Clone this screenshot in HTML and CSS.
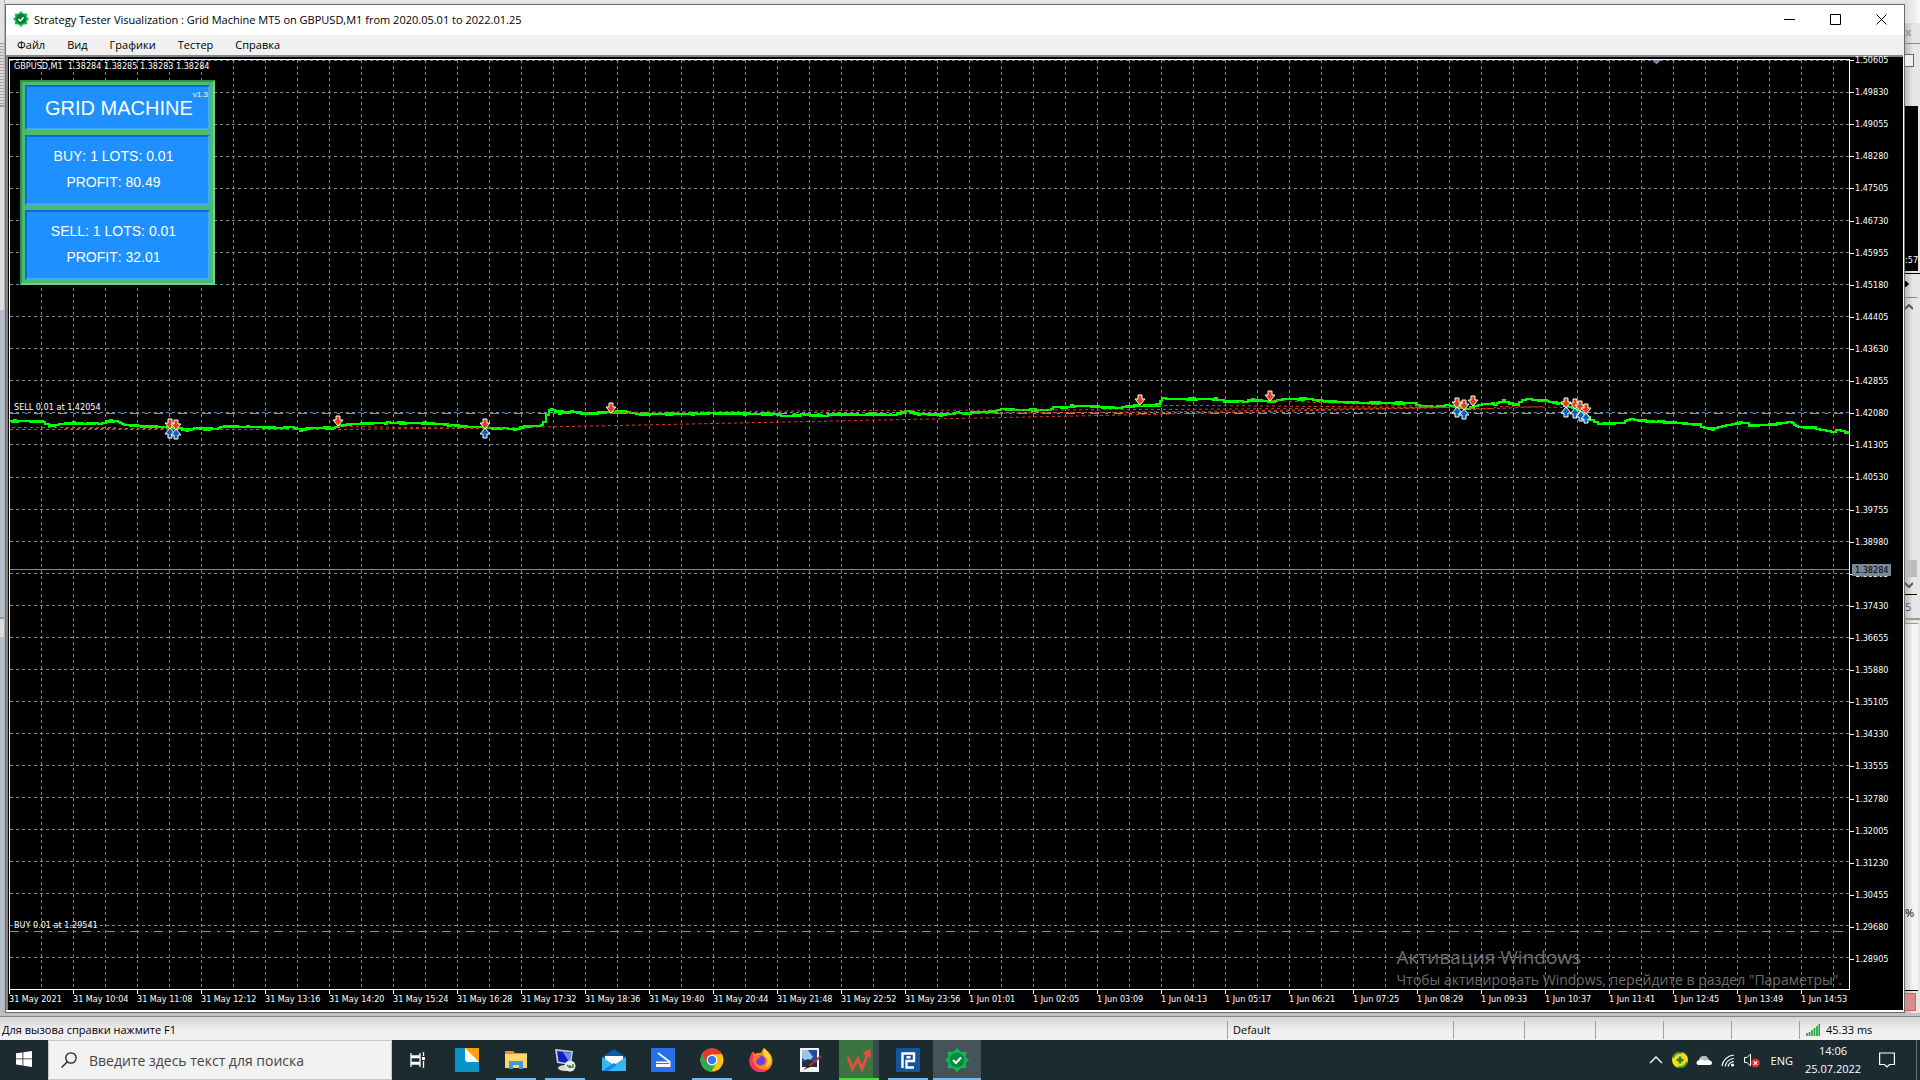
FILE: index.html
```html
<!DOCTYPE html>
<html lang="ru">
<head>
    <meta charset="UTF-8">
    <meta name="viewport" content="width=device-width, initial-scale=1.0">
    <title>Strategy Tester Visualization</title>
    <link rel="stylesheet" href="styles.css">
</head>
<body>
    <div class="workspace">
        <div class="behind-left">
            <div class="bl-title"></div>
            <div class="bl-tools"></div>
            <div class="bl-light"></div>
            <div class="bl-blue"></div>
            <div class="bl-split"></div>
            <div class="bl-blue bl-rest"></div>
        </div>

        <main class="window">
            <header class="titlebar">
                <svg class="app-icon" viewBox="0 0 24 24"><path d="M12 0l3.600 3.700L21.500 4l-1 4.800L24 12l-3.500 3.200 1 4.800-5.900.300L12 24l-3.600-3.700L2.500 20l1-4.800L0 12l3.500-3.200-1-4.800 5.900-.300z" fill="#10b94e"/><circle cx="12" cy="12" r="7.500" fill="#067a38"/><path d="M8 12l3 3 5-5.500" fill="none" stroke="#fff" stroke-width="2.200"/></svg>
                <h1>Strategy Tester Visualization : Grid Machine MT5 on GBPUSD,M1 from 2020.05.01 to 2022.01.25</h1>
                <button class="win-btn" aria-label="Свернуть"><svg viewBox="0 0 11 11"><path d="M0 5.500h11"/></svg></button>
                <button class="win-btn" aria-label="Развернуть"><svg viewBox="0 0 11 11"><path d="M.5.5h10v10H.5z"/></svg></button>
                <button class="win-btn" aria-label="Закрыть"><svg viewBox="0 0 11 11"><path d="M.5.5l10 10M10.500.5l-10 10"/></svg></button>
            </header>
            <nav class="menubar">
                <button>Файл</button>
                <button>Вид</button>
                <button>Графики</button>
                <button>Тестер</button>
                <button>Справка</button>
            </nav>

            <div class="chart">
                <div class="plot">
                    <svg id="plotSvg" viewBox="10 60 1839 929" preserveAspectRatio="none">
                        <defs>
                            <path id="sellArrow" d="M-2-5h4v4h3L0 5-5-1h3z" fill="#e0401c" stroke="#fff"/>
                            <path id="buyArrow" d="M-2 5h4V1h3L0-5-5 1h3z" fill="#1060b8" stroke="#fff"/>
                        </defs>
                        <g id="grid" class="grid"></g>
                        <path class="position" d="M10 413.500H1849M10 931.500H1849"/>
                        <path class="bid" d="M10 569.500H1849"/>
                        <path id="price" class="price"/>
                        <path class="trades" d="M12 427.500H116M10 429.500H320M65 428.500H170M338 426.500L485 428.500M338 429.500L520 427.500L1100 415.500L1445 407.500M611 412.500L860 410.500L1160 409.500L1450 407.500M950 413.500L1200 411.500L1450 407.500M1140 405.500H1200L1450 407.500M1271 400.500L1320 402.500L1456 407.500M1473 409.500L1545 406.500M1470 408.500H1490L1500 406.500L1570 407.500"/>
                        <g id="arrows"></g>
                        <path d="M1652 60h9l-4.500 4.500z" fill="#778899"/>
                    </svg>
                    <p class="quote">GBPUSD,M1&nbsp; 1.38284 1.38285 1.38283 1.38284</p>
                    <section class="panel">
                        <div class="panel-head">GRID MACHINE<small>v1.3</small></div>
                        <div class="panel-row"><span>BUY: 1 LOTS: 0.01</span><span>PROFIT: 80.49</span></div>
                        <div class="panel-row"><span>SELL: 1 LOTS: 0.01</span><span>PROFIT: 32.01</span></div>
                    </section>
                    <p class="order order-sell">SELL 0.01 at 1.42054</p>
                    <p class="order order-buy">BUY 0.01 at 1.29541</p>
                </div>
                <div class="price-axis">
                    <ul>
                        <li>1.50605</li><li>1.49830</li><li>1.49055</li><li>1.48280</li><li>1.47505</li>
                        <li>1.46730</li><li>1.45955</li><li>1.45180</li><li>1.44405</li><li>1.43630</li>
                        <li>1.42855</li><li>1.42080</li><li>1.41305</li><li>1.40530</li><li>1.39755</li>
                        <li>1.38980</li><li>1.38205</li><li>1.37430</li><li>1.36655</li><li>1.35880</li>
                        <li>1.35105</li><li>1.34330</li><li>1.33555</li><li>1.32780</li><li>1.32005</li>
                        <li>1.31230</li><li>1.30455</li><li>1.29680</li><li>1.28905</li>
                    </ul>
                    <span class="price-tag">1.38284</span>
                </div>
                <ul class="time-axis">
                    <li>31 May 2021</li><li>31 May 10:04</li><li>31 May 11:08</li><li>31 May 12:12</li>
                    <li>31 May 13:16</li><li>31 May 14:20</li><li>31 May 15:24</li><li>31 May 16:28</li>
                    <li>31 May 17:32</li><li>31 May 18:36</li><li>31 May 19:40</li><li>31 May 20:44</li>
                    <li>31 May 21:48</li><li>31 May 22:52</li><li>31 May 23:56</li><li>1 Jun 01:01</li>
                    <li>1 Jun 02:05</li><li>1 Jun 03:09</li><li>1 Jun 04:13</li><li>1 Jun 05:17</li>
                    <li>1 Jun 06:21</li><li>1 Jun 07:25</li><li>1 Jun 08:29</li><li>1 Jun 09:33</li>
                    <li>1 Jun 10:37</li><li>1 Jun 11:41</li><li>1 Jun 12:45</li><li>1 Jun 13:49</li>
                    <li>1 Jun 14:53</li>
                </ul>
            </div>
        </main>

        <div class="behind-right">
            <div class="br-title"></div>
            <div class="br-close">x</div>
            <div class="br-tools"><i></i></div>
            <div class="br-chart">:57</div>
            <div class="br-tab"><svg viewBox="0 0 5 8"><path d="M0 1h1l3 3-3 3H0z"/></svg></div>
            <div class="br-scroll">
                <svg viewBox="0 0 8 6"><path d="M0 5l4-4 4 4"/></svg>
                <i></i>
                <svg viewBox="0 0 8 6"><path d="M0 1l4 4 4-4"/></svg>
            </div>
            <div class="br-num">5</div>
            <div class="br-list">%</div>
            <div class="br-stop"></div>
        </div>

        <div class="watermark">
            <p class="wm-title">Активация Windows</p>
            <p>Чтобы активировать Windows, перейдите в раздел "Параметры".</p>
        </div>
    </div>

    <div class="statusbar">
        <span class="st-help">Для вызова справки нажмите F1</span>
        <span class="st-profile">Default</span>
        <span class="st-cell"></span>
        <span class="st-cell"></span>
        <span class="st-cell"></span>
        <span class="st-cell"></span>
        <span class="st-cell"></span>
        <span class="st-ping"><svg viewBox="0 0 14 12"><path d="M1 12V9M3.500 12V8M6 12V6M8.500 12V4M11 12V2M13.300 12V0" stroke="#1fa33c" stroke-width="1.700"/></svg>45.33 ms</span>
    </div>

    <footer class="taskbar">
        <button class="start" aria-label="Пуск"><svg viewBox="0 0 16 16" width="16" height="16"><path d="M0 2.300L6.500 1.400v6.100H0zM7.300 1.300L16 0v7.500H7.300zM0 8.300h6.500v6.200L0 13.600zM7.300 8.300H16V16l-8.700-1.300z" fill="#fff"/></svg></button>
        <label class="search">
            <svg viewBox="0 0 16 16"><circle cx="10" cy="6" r="5.200"/><path d="M6.300 9.700L.6 15.500"/></svg>
            <input type="text" placeholder="Введите здесь текст для поиска" aria-label="Поиск">
        </label>
        <div class="apps">
            <button aria-label="Представление задач"><svg viewBox="0 0 24 24"><path d="M5 5v3h9V5M5 19v-3h9v3M5 9.500h9v5H5zM17.500 4v4M17.500 13v7" fill="none" stroke="#fff" stroke-width="1.300"/><path d="M16 9h3v3h-3z" fill="#fff"/></svg></button>
            <button aria-label="Редактор"><svg viewBox="0 0 24 24"><rect width="24" height="24" rx="1" fill="#0a93c6"/><path d="M10 0h14v14H13q-3 0-3-3z" fill="#fff"/><path d="M10 0h14v14z" fill="#ff9f0f"/></svg></button>
            <button class="open" aria-label="Проводник"><svg viewBox="0 0 24 24"><path d="M1 3h8l2 2h12v5H1z" fill="#e09a12"/><path d="M1 6h22v14H1z" fill="#ffd766"/><path d="M5 21v-8h14v8h-4v-4H9v4z" fill="#3f98e0"/></svg></button>
            <button class="open" aria-label="Удалённый рабочий стол"><svg viewBox="0 0 24 24"><path d="M2 1l18 2-2 14L4 15z" fill="#c8ccd8"/><path d="M4 3l14 1.500-1.500 11L5.500 13.500z" fill="#1020c0"/><path d="M10 4l8 1-1.500 10z" fill="#6a8cf0"/><ellipse cx="12" cy="20" rx="7" ry="3" fill="#d8d8d8"/><circle cx="17" cy="18" r="5.500" fill="#e8e8e8"/><path d="M14 17l3 3M17 20v-3M20 16v3h-3" stroke="#28943a" stroke-width="1.500" fill="none"/></svg></button>
            <button aria-label="Почта"><svg viewBox="0 0 24 24"><path d="M0 9L12 1l12 8v3H0z" fill="#0a5cae"/><path d="M3 8h18v8H3z" fill="#fff"/><path d="M0 9l12 8 12-8v14H0z" fill="#35b8f2"/><path d="M0 23l12-8 3 2-9 6z" fill="#1688dc"/></svg></button>
            <button aria-label="Сканер"><svg viewBox="0 0 24 24"><rect width="24" height="24" fill="#2a6fea"/><path d="M7 5l12 9" stroke="#fff" stroke-width="1.600"/><path d="M5 13.500h14.500V19H5z" fill="#fff"/><path d="M5 15.500h13" stroke="#2a6fea"/></svg></button>
            <button class="open" aria-label="Chrome"><svg viewBox="0 0 24 24"><circle cx="12" cy="12" r="11.500" fill="#fbc116"/><path d="M12 12L2 6.300a11.500 11.500 0 0 0 9.500 17.200l5-9z" fill="#2da94f"/><path d="M2 6.300A11.500 11.500 0 0 1 22 6.300H12L7 14.800z" fill="#e33b2e"/><circle cx="12" cy="12" r="5.400" fill="#fff"/><circle cx="12" cy="12" r="4.200" fill="#2f7de9"/></svg></button>
            <button aria-label="Firefox"><svg viewBox="0 0 24 24"><path d="M15 0c4 3 8.500 7 8.500 13A11.500 11 0 0 1 .5 13C.5 9 2 6 4 3.500L6 6q3-2 6-1 1-3 3-5z" fill="#ff8a16"/><path d="M15 0c2 3 8 6 7 13-1 4-4 6-6 6 4-5 3-9-1-11-1-3-1-5 0-8z" fill="#ffd53c"/><path d="M.5 13A11.500 11 0 0 0 20 21Q8 24 4 13L4 4Q.5 8 .5 13z" fill="#f5355b"/><circle cx="11.500" cy="12.500" r="5" fill="#7a3ddb"/><path d="M4 8q5-2 8 1-5 1-4 4-4-1-4-5z" fill="#ff7a1c"/></svg></button>
            <button aria-label="Рисунок"><svg viewBox="0 0 24 24"><path d="M2 0h19v24H2z" fill="#f2f2f2"/><path d="M4 2h15v15H4z" fill="#1c4e9a"/><path d="M4 2h6l5 7-5 5-6-4z" fill="#9ac4ee"/><path d="M4 14l6-3 9 4v4H4z" fill="#22303e"/><path d="M23 8L10 19" stroke="#b03030" stroke-width="2"/><path d="M11 17l-6 5 7-3z" fill="#222"/></svg></button>
            <button class="alert" aria-label="Webmoney"><svg viewBox="0 0 24 24"><path d="M1 9l4.500 12L11 11l4 10L21 5M16.500 6L22 3l1 6" fill="none" stroke="#ee4a42" stroke-width="2.800"/></svg></button>
            <button class="open" aria-label="Project"><svg viewBox="0 0 24 24"><rect width="24" height="24" rx="1" fill="#15549c"/><path d="M6.500 20V5.500H18v7.500h-7.500v6.500H18M10.500 9.300h4" fill="none" stroke="#fff" stroke-width="2.400"/></svg></button>
            <button class="active" aria-label="Strategy Tester"><svg viewBox="0 0 24 24"><path d="M12 0l3.600 3.700L21.500 4l-1 4.800L24 12l-3.500 3.200 1 4.800-5.900.300L12 24l-3.600-3.700L2.500 20l1-4.800L0 12l3.500-3.200-1-4.800 5.900-.300z" fill="#10b94e"/><circle cx="12" cy="12" r="7.500" fill="#078a3f"/><path d="M8 12l3 3 5-5.500" fill="none" stroke="#fff" stroke-width="2"/></svg></button>
        </div>
        <div class="tray">
            <svg viewBox="0 0 16 16"><path d="M2 11l6-6 6 6" fill="none" stroke="#fff" stroke-width="1.300"/></svg>
            <svg viewBox="0 0 16 16"><circle cx="8" cy="8" r="8" fill="#ffd91e"/><path d="M1 6a7.300 7.300 0 0 1 9-5M15 10a7.300 7.300 0 0 1-9 5" fill="none" stroke="#2f9a38" stroke-width="2"/><path d="M8 4.500v7M4.500 8h7" stroke="#168a2c" stroke-width="2.600"/></svg>
            <svg viewBox="0 0 16 16"><path d="M3 8a5 5 0 0 1 9-2l2 4H3z" fill="#b9bcbe"/><path d="M2 13a2.500 2.500 0 0 1 1-4.800Q6 6 8.500 9L12 8q4 .5 4 3 0 2-2 2z" fill="#fff"/></svg>
            <svg viewBox="0 0 16 16"><path d="M2 14A13 13 0 0 1 14 3M5 14.500A10 10 0 0 1 14 6.500M8 14.500A7 7 0 0 1 14 9.500" fill="none" stroke="#fff" stroke-width="1.200"/><circle cx="12.500" cy="13" r="1.600" fill="#fff"/></svg>
            <svg viewBox="0 0 16 16"><path d="M.5 5.500h2.500L6.500 2v12L3 10.500H.5z" fill="none" stroke="#fff"/><circle cx="11.500" cy="11" r="4.500" fill="#e0262e"/><path d="M9.700 9.200l3.600 3.600M13.300 9.200l-3.600 3.600" stroke="#fff" stroke-width="1.200"/></svg>
            <span class="lang">ENG</span>
            <time class="clock" datetime="2022-07-25T14:06"><span>14:06</span><span>25.07.2022</span></time>
            <svg class="notify" viewBox="0 0 16 16"><path d="M.6 1h14.800v11.500H10.500L8 15l-2.500-2.500H.6z" fill="none" stroke="#fff" stroke-width="1.200"/></svg>
            <span class="peek"></span>
        </div>
    </footer>

    <script src="script.js"></script>
</body>
</html>
```
FILE: styles.css
```css
* {
    box-sizing: border-box;
}

body {
    margin: 0;
    height: 100vh;
    display: flex;
    flex-direction: column;
    overflow: hidden;
    background-color: #ececec;
    color: #000;
    font-family: "Open Sans", "Noto Sans", sans-serif;
    font-size: 11px;
}

h1, p, ul {
    margin: 0;
    padding: 0;
    font-weight: normal;
    list-style: none;
}

button {
    border: 0;
    padding: 0;
    background: none;
    font: inherit;
    color: inherit;
}

.workspace {
    position: relative;
    flex: 1;
    display: flex;
    min-height: 0;
    padding-bottom: 3px;
    background: linear-gradient(#ededed, #d8d8d8 6px, #c2c0c0);
}

/* edges of the terminal behind the tester window */
.behind-left {
    width: 5px;
    display: flex;
    flex-direction: column;
    border-right: 1px solid #b4b4b4;
    background-color: #d4d4d4;
}

.bl-title {
    height: 44px;
    border-bottom: 1px solid #999;
    background-color: #e2e2e2;
}

.bl-tools {
    height: 63px;
    border-bottom: 2px solid #999;
    background: repeating-linear-gradient(#d8d8d8 0 2px, #aaa 2px 3px);
}

.bl-light {
    height: 203px;
    background-color: #dcdcdc;
}

.bl-blue {
    height: 307px;
    background-color: #b3c0cc;
}

.bl-split {
    height: 20px;
    border-top: 2px solid #999;
    background-color: #dcdcdc;
}

.bl-rest {
    flex: 1;
}

.behind-right {
    width: 15px;
    display: flex;
    flex-direction: column;
    background: linear-gradient(90deg, #bbb, #e6e6e6 8px);
}

.br-title {
    height: 23px;
    background: linear-gradient(90deg, #ddd, #fafafa);
}

.br-close {
    height: 21px;
    border-bottom: 1px solid #888;
    color: #999;
    font-weight: bold;
    line-height: 18px;
}

.br-tools {
    height: 62px;
    padding-top: 10px;
}

.br-tools i {
    display: block;
    width: 9px;
    height: 13px;
    border: 1px solid #666;
    border-left: 0;
    background-color: #f0f0f0;
}

.br-chart {
    width: 13px;
    height: 165px;
    padding-top: 147px;
    background-color: #000;
    color: #fff;
    font: 9px/14px "DejaVu Sans Condensed", sans-serif;
}

.br-tab {
    height: 24px;
    margin-top: 2px;
    padding-top: 6px;
    border-top: 1px solid #000;
}

.br-tab svg {
    display: block;
    width: 5px;
    height: 8px;
}

.br-scroll {
    width: 12px;
    height: 298px;
    padding: 6px 0;
    display: flex;
    flex-direction: column;
    justify-content: flex-end;
    gap: 5px;
    border-top: 1px solid #888;
    border-bottom: 1px solid #000;
}

.br-scroll svg {
    width: 8px;
    height: 6px;
    fill: none;
    stroke: #555;
    stroke-width: 2;
}

.br-scroll svg:first-child {
    margin-bottom: auto;
}

.br-scroll i {
    height: 17px;
    background-color: #bdbdbd;
}

.br-num {
    height: 25px;
    border-bottom: 2px solid #999;
    color: #2d5f8c;
    line-height: 24px;
}

.br-list {
    flex: 1;
    width: 13px;
    margin-top: 3px;
    padding-top: 281px;
    border-top: 1px solid #999;
    border-bottom: 1px solid #000;
    background: linear-gradient(90deg, #c8c8c8, #f4f4f4 8px);
    overflow: hidden;
}

.br-stop {
    width: 11px;
    height: 18px;
    margin: 2px 0;
    border: 1px solid #c66;
    border-left: 0;
    background-color: #d98c8e;
}

/* tester window */
.window {
    flex: 1;
    min-width: 0;
    margin-top: 4px;
    display: flex;
    flex-direction: column;
    border: 1px solid #6b6b6b;
    background-color: #fff;
}

.titlebar {
    height: 30px;
    padding: 0 0 2px 7px;
    display: flex;
    align-items: center;
}

.titlebar h1 {
    flex: 1;
    padding-left: 5px;
    font-size: 11px;
}

.app-icon {
    width: 16px;
    height: 16px;
}

.win-btn {
    align-self: flex-start;
    width: 46px;
    height: 30px;
}

.win-btn svg {
    width: 11px;
    height: 11px;
    fill: none;
    stroke: #000;
}

.menubar {
    height: 20px;
    padding-bottom: 2px;
    display: flex;
    background-color: #f0f0f0;
}

.menubar button {
    padding: 0 11px;
}

.chart {
    flex: 1;
    min-height: 0;
    margin: 0 1px 2px 0;
    padding: 2px 0 0 1px;
    display: grid;
    grid-template-columns: 1fr 53px;
    grid-template-rows: 1fr 21px;
    border-top: 2px solid #868686;
    border-left: 2px solid #868686;
    background-color: #000;
    color: #fff;
    font: 9px/12px "DejaVu Sans Condensed", "DejaVu Sans", sans-serif;
}

.plot {
    position: relative;
    border: 1px solid #fff;
}

.plot > svg {
    display: block;
    width: 100%;
    height: 100%;
}

.grid {
    stroke: #778899;
    stroke-dasharray: 3 3;
}

.position {
    fill: none;
    stroke: #32cd32;
    stroke-dasharray: 9 6 3 6;
}

.bid {
    stroke: #778899;
}

.price {
    fill: none;
    stroke: #00ff00;
    stroke-width: 2;
}

.trades {
    fill: none;
    stroke: #e04020;
    stroke-dasharray: 3 3;
}

.quote,
.order {
    position: absolute;
    left: 4px;
    top: 0;
}

.order-sell {
    top: 37%;
    margin-top: -3px;
}

.order-buy {
    top: 92%;
    margin-top: 4px;
}

.panel {
    position: absolute;
    top: 20px;
    left: 10px;
    width: 195px;
    padding: 3px;
    display: flex;
    flex-direction: column;
    gap: 5px;
    border: 2px solid;
    border-color: #309050 #6cd48c #6cd48c #309050;
    background-color: #50b870;
    font-family: "Liberation Sans", Arial, sans-serif;
    font-kerning: none;
}

.panel-head,
.panel-row {
    border: 2px solid;
    border-color: #0070e0 #3cacff #3cacff #0070e0;
    background-color: #1e90ff;
}

.panel-head {
    height: 45px;
    padding-left: 18px;
    display: flex;
    font-size: 20px;
    line-height: 43px;
}

.panel-head small {
    padding-top: 2px;
    font-size: 8px;
    line-height: 12px;
}

.panel-row {
    height: 70px;
    padding: 6px 8px 0 0;
    display: flex;
    flex-direction: column;
    align-items: center;
    font-size: 14px;
    line-height: 26px;
}

.price-axis {
    position: relative;
}

.price-axis ul {
    height: 100%;
    margin-top: -5px;
    display: flex;
    flex-direction: column;
}

.price-axis li {
    flex: 1;
    display: flex;
}

.price-axis li::before {
    content: "";
    width: 4px;
    height: 1px;
    margin: 6px 1px 0 0;
    background-color: #fff;
}

.price-tag {
    position: absolute;
    top: 505px;
    left: 2px;
    width: 39px;
    height: 12px;
    padding-left: 3px;
    background-color: #778899;
    color: #000;
}

.time-axis {
    grid-column: 1 / 3;
    display: flex;
    overflow: hidden;
}

.time-axis li {
    flex: 0 0 64px;
    padding-top: 3px;
    white-space: nowrap;
    background: linear-gradient(#fff, #fff) no-repeat 0 0 / 1px 4px;
}

.watermark {
    position: absolute;
    right: 78px;
    bottom: 26px;
    color: rgba(140, 140, 140, 0.8);
    font-size: 14px;
    line-height: 20px;
}

.watermark .wm-title {
    font-size: 19px;
    line-height: 26px;
}

/* terminal status bar */
.statusbar {
    height: 24px;
    padding: 4px 0 1px;
    display: flex;
    border-top: 1px solid #888;
    background: linear-gradient(#d6d6d6, #f0f0f0 14px);
    line-height: 18px;
}

.statusbar span + span {
    border-left: 1px solid #a0a0a0;
}

.st-help {
    flex: 1;
    padding-left: 2px;
}

.st-profile {
    width: 226px;
    padding-left: 5px;
}

.st-cell {
    width: 71px;
}

.st-cell:nth-child(n + 5) {
    width: 68px;
}

.st-ping {
    width: 121px;
    padding-left: 6px;
    display: flex;
    align-items: center;
    gap: 6px;
}

.st-ping svg {
    width: 14px;
    height: 12px;
}

/* taskbar */
.taskbar {
    height: 40px;
    display: flex;
    background-color: #1b2b30;
    color: #fff;
}

.start {
    width: 48px;
}

.search {
    width: 344px;
    padding-left: 12px;
    display: flex;
    align-items: center;
    gap: 12px;
    border: 1px solid #c8c8c8;
    background-color: #f2f2f2;
}

.search svg {
    width: 16px;
    height: 16px;
    fill: none;
    stroke: #222;
    stroke-width: 1.3;
}

.search input {
    flex: 1;
    border: 0;
    outline: 0;
    padding: 0;
    background: none;
    font: 14px "Open Sans", "Noto Sans", sans-serif;
}

.search input::placeholder {
    color: #444;
}

.apps {
    flex: 1;
    display: flex;
    gap: 9px;
    padding-left: 6px;
}

.apps button {
    width: 40px;
    display: flex;
    align-items: center;
    justify-content: center;
    border-bottom: 2px solid transparent;
    border-top: 2px solid transparent;
}

.apps svg {
    width: 24px;
    height: 24px;
}

.apps .open {
    border-bottom-color: #76b9ed;
}

.apps .alert {
    border-bottom-color: #4cdc3c;
    background: linear-gradient(90deg, #3c7440 34px, #3a4a50 34px) border-box;
}

.apps .active {
    width: 48px;
    margin-left: -4px;
    border-bottom-color: #76b9ed;
    background: #46545a border-box;
    border-top-color: #46545a;
}

.tray {
    display: flex;
    align-items: center;
    gap: 8px;
    font-size: 12px;
}

.tray svg {
    width: 16px;
    height: 16px;
}

.lang {
    margin-left: 3px;
    font-size: 11px;
}

.clock {
    width: 64px;
    display: flex;
    flex-direction: column;
    align-items: center;
    font-size: 11px;
    line-height: 18px;
}

.tray .notify {
    margin: 0 13px 0 6px;
}

.peek {
    width: 4px;
    height: 100%;
    border-left: 1px solid #66747a;
}
```
FILE: script.js
```js
var NS = "http://www.w3.org/2000/svg";

// bar closes: x, y
var points = [
    10,421, 24,421, 41,422, 51,426, 59,424, 73,423, 96,424, 104,423, 108,421, 116,421,
    124,425, 139,426, 163,427, 176,428, 186,430, 196,428, 204,429, 216,429, 224,426, 245,427,
    261,427, 282,428, 292,427, 300,430, 310,428, 331,428, 339,426, 351,424, 388,423, 424,423,
    449,425, 469,427, 486,427, 492,429, 504,428, 514,430, 522,427, 539,426, 544,422, 547,412,
    551,409, 559,413, 563,411, 567,413, 571,411, 586,414, 596,413, 610,412, 628,412, 638,414,
    695,414, 712,413, 744,414, 773,414, 783,416, 802,415, 822,416, 838,414, 859,415, 871,414,
    893,415, 906,411, 916,414, 940,415, 953,414, 957,412, 963,414, 971,413, 995,411, 1002,409,
    1014,410, 1049,410, 1053,407, 1065,408, 1071,406, 1089,406, 1100,407, 1116,408, 1132,406,
    1158,405, 1162,398, 1171,399, 1218,399, 1226,402, 1239,401, 1244,402, 1252,400, 1273,402,
    1280,399, 1309,399, 1320,401, 1362,403, 1414,403, 1418,406, 1435,407, 1448,405, 1456,407,
    1466,409, 1472,407, 1482,404, 1495,404, 1503,401, 1511,404, 1517,405, 1520,401, 1526,399,
    1545,401, 1560,404, 1576,409, 1586,416, 1592,421, 1599,424, 1623,423, 1628,419, 1644,421,
    1662,422, 1681,423, 1699,425, 1702,427, 1712,429, 1722,426, 1743,422, 1751,426, 1775,424,
    1790,422, 1798,427, 1814,428, 1827,431, 1832,432, 1837,430, 1849,433
];
var sells = [170,424, 176,425, 338,421, 485,424, 611,408, 1140,400, 1270,396, 1457,403, 1464,405, 1473,401, 1566,403, 1575,404, 1580,406, 1586,409];
var buys = [170,433, 176,434, 485,433, 1457,412, 1464,414, 1566,412, 1575,413, 1581,416, 1586,418];

function addGrid() {
    var grid = document.getElementById("grid");
    var d = "";
    for (var i = 0; i < 29; i++) {
        d += "M10 " + (60.5 + i * 32 + (i > 12 ? 1 : 0)) + "H1849";
    }
    for (var x = 41.5; x < 1849; x += 32) {
        d += "M" + x + " 60V989";
    }
    var path = document.createElementNS(NS, "path");
    path.setAttribute("d", d);
    grid.appendChild(path);
}

function addPrice() {
    var d = "M10 421";
    for (var i = 0; i < points.length - 2; i += 2) {
        var x1 = points[i], y1 = points[i + 1], x2 = points[i + 2], y2 = points[i + 3];
        for (var x = x1 + 2; x <= x2; x += 2) {
            var y = Math.round(y1 + (y2 - y1) * (x - x1) / (x2 - x1) + Math.sin(x * 1.7) * 0.6);
            d += "H" + x + "V" + y;
        }
    }
    document.getElementById("price").setAttribute("d", d);
}

function addArrows(list, id) {
    var group = document.getElementById("arrows");
    for (var i = 0; i < list.length; i += 2) {
        var use = document.createElementNS(NS, "use");
        use.setAttribute("href", "#" + id);
        use.setAttribute("x", list[i]);
        use.setAttribute("y", list[i + 1]);
        group.appendChild(use);
    }
}

addGrid();
addPrice();
addArrows(buys, "buyArrow");
addArrows(sells, "sellArrow");
```
